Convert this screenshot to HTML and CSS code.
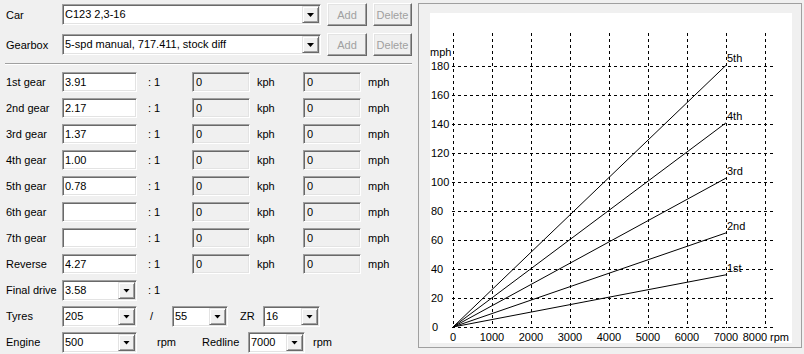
FILE: index.html
```html
<!DOCTYPE html>
<html lang="en">
<head>
  <meta charset="UTF-8" />
  <title>Gear Ratio Calculator</title>
  <link rel="stylesheet" href="styles.css">
</head>
<body>
<div class="app">

  <div class="form">
    <div class="toprow">
      <span class="lbl">Car</span>
      <div class="combo wide"><span>C123 2,3-16</span><span class="drop"></span></div>
      <button class="btn add" disabled>Add</button>
      <button class="btn del" disabled>Delete</button>
    </div>
    <div class="toprow">
      <span class="lbl">Gearbox</span>
      <div class="combo wide"><span>5-spd manual, 717.411, stock diff</span><span class="drop"></span></div>
      <button class="btn add" disabled>Add</button>
      <button class="btn del" disabled>Delete</button>
    </div>

    <div class="sep"></div>

    <div class="row">
      <span class="lbl">1st gear</span>
      <input class="box" value="3.91">
      <span class="ratio">: 1</span>
      <input class="box ro" value="0" readonly>
      <span class="unit">kph</span>
      <input class="box ro" value="0" readonly>
      <span class="unit">mph</span>
    </div>
    <div class="row">
      <span class="lbl">2nd gear</span>
      <input class="box" value="2.17">
      <span class="ratio">: 1</span>
      <input class="box ro" value="0" readonly>
      <span class="unit">kph</span>
      <input class="box ro" value="0" readonly>
      <span class="unit">mph</span>
    </div>
    <div class="row">
      <span class="lbl">3rd gear</span>
      <input class="box" value="1.37">
      <span class="ratio">: 1</span>
      <input class="box ro" value="0" readonly>
      <span class="unit">kph</span>
      <input class="box ro" value="0" readonly>
      <span class="unit">mph</span>
    </div>
    <div class="row">
      <span class="lbl">4th gear</span>
      <input class="box" value="1.00">
      <span class="ratio">: 1</span>
      <input class="box ro" value="0" readonly>
      <span class="unit">kph</span>
      <input class="box ro" value="0" readonly>
      <span class="unit">mph</span>
    </div>
    <div class="row">
      <span class="lbl">5th gear</span>
      <input class="box" value="0.78">
      <span class="ratio">: 1</span>
      <input class="box ro" value="0" readonly>
      <span class="unit">kph</span>
      <input class="box ro" value="0" readonly>
      <span class="unit">mph</span>
    </div>
    <div class="row">
      <span class="lbl">6th gear</span>
      <input class="box" value="">
      <span class="ratio">: 1</span>
      <input class="box ro" value="0" readonly>
      <span class="unit">kph</span>
      <input class="box ro" value="0" readonly>
      <span class="unit">mph</span>
    </div>
    <div class="row">
      <span class="lbl">7th gear</span>
      <input class="box" value="">
      <span class="ratio">: 1</span>
      <input class="box ro" value="0" readonly>
      <span class="unit">kph</span>
      <input class="box ro" value="0" readonly>
      <span class="unit">mph</span>
    </div>
    <div class="row">
      <span class="lbl">Reverse</span>
      <input class="box" value="4.27">
      <span class="ratio">: 1</span>
      <input class="box ro" value="0" readonly>
      <span class="unit">kph</span>
      <input class="box ro" value="0" readonly>
      <span class="unit">mph</span>
    </div>

    <div class="row">
      <span class="lbl">Final drive</span>
      <div class="combo sm"><span>3.58</span><span class="drop"></span></div>
      <span class="ratio">: 1</span>
    </div>
    <div class="row">
      <span class="lbl">Tyres</span>
      <div class="combo sm"><span>205</span><span class="drop"></span></div>
      <span class="slash">/</span>
      <div class="combo w56"><span>55</span><span class="drop"></span></div>
      <span class="zr">ZR</span>
      <div class="combo w57"><span>16</span><span class="drop"></span></div>
    </div>
    <div class="row">
      <span class="lbl">Engine</span>
      <div class="combo sm"><span>500</span><span class="drop"></span></div>
      <span class="rpm">rpm</span>
      <span class="redline">Redline</span>
      <div class="combo w57"><span>7000</span><span class="drop"></span></div>
      <span class="rpm2">rpm</span>
    </div>
  </div>

  <div class="chart">
    <svg width="362" height="330" viewBox="0 0 362 330">
      <!-- dashed grid: 39px per 1000 rpm, 29px per 20 mph -->
      <path class="grid" d="M22 314.5H345 M22 285.5H345 M22 256.5H345 M22 227.5H345 M22 198.5H345 M22 169.5H345 M22 140.5H345 M22 111.5H345 M22 82.5H345 M22 53.5H345
        M23.5 20V315 M62.5 20V315 M101.5 20V315 M140.5 20V315 M179.5 20V315 M218.5 20V315 M257.5 20V315 M296.5 20V315 M335.5 20V315"/>

      <!-- gear lines, 0 to 7000 rpm -->
      <path class="gear" d="M23 314L296 261.8"/>
      <path class="gear" d="M23 314L296 219.9"/>
      <path class="gear" d="M23 314L296 165.1"/>
      <path class="gear" d="M23 314L296 109.8"/>
      <path class="gear" d="M23 314L296 52.3"/>

      <text x="297" y="259">1st</text>
      <text x="297" y="217">2nd</text>
      <text x="297" y="162">3rd</text>
      <text x="297" y="107">4th</text>
      <text x="297" y="49">5th</text>

      <text x="0" y="43">mph</text>
      <text x="1" y="57">180</text>
      <text x="1" y="86">160</text>
      <text x="1" y="115">140</text>
      <text x="1" y="144">120</text>
      <text x="1" y="173">100</text>
      <text x="1" y="202">80</text>
      <text x="1" y="231">60</text>
      <text x="1" y="260">40</text>
      <text x="1" y="289">20</text>
      <text x="2" y="318">0</text>

      <g text-anchor="middle">
        <text x="23" y="328">0</text>
        <text x="62" y="328">1000</text>
        <text x="101" y="328">2000</text>
        <text x="140" y="328">3000</text>
        <text x="179" y="328">4000</text>
        <text x="218" y="328">5000</text>
        <text x="257" y="328">6000</text>
        <text x="296" y="328">7000</text>
        <text x="325" y="328">8000</text>
      </g>
      <text x="340" y="328">rpm</text>
    </svg>
  </div>

</div>
</body>
</html>
```

FILE: styles.css
```css
* {
  box-sizing: border-box;
}
body {
  margin: 0;
  background: #f0f0f0;
  font-family: "Liberation Sans", Arial, sans-serif;
  font-size: 11px;
  color: #000;
}
.app {
  display: flex;
  width: 804px;
  height: 354px;
}
.form {
  width: 418px;
  flex: none;
  padding: 3px 0 0 6px;
}
.toprow {
  display: flex;
  align-items: center;
  height: 23px;
}
.toprow + .toprow {
  margin-top: 7px;
}
.lbl {
  width: 56px;
  flex: none;
}
.combo {
  position: relative;
  flex: none;
  height: 21px;
  padding-left: 2px;
  line-height: 19px;
  background: #fff;
  border: 1px solid;
  border-color: #a0a0a0 #fff #fff #a0a0a0;
  box-shadow: inset 1px 1px 0 #696969, inset -1px -1px 0 #e3e3e3;
  white-space: nowrap;
}
.combo .drop {
  position: absolute;
  top: 1px;
  right: 1px;
  bottom: 1px;
  width: 17px;
  background: #f0f0f0;
  border: 1px solid;
  border-color: #e3e3e3 #696969 #696969 #e3e3e3;
  box-shadow: inset 1px 1px 0 #fff, inset -1px -1px 0 #a0a0a0;
}
.combo .drop::after {
  content: "";
  position: absolute;
  left: 4px;
  top: 6px;
  width: 7px;
  height: 4px;
  background: #000;
  clip-path: polygon(0 0, 100% 0, 50% 100%);
}
.wide {
  width: 259px;
}
.sm {
  width: 75px;
}
.w56 {
  width: 56px;
}
.w57 {
  width: 57px;
}
.btn {
  height: 23px;
  margin-left: 6px;
  padding: 0;
  font: inherit;
  color: #a0a0a0;
  background: #f0f0f0;
  border: 1px solid;
  border-color: #fff #696969 #696969 #fff;
  box-shadow: inset -1px -1px 0 #a0a0a0, inset 1px 1px 0 #e3e3e3;
}
.add {
  width: 40px;
}
.del {
  width: 39px;
}
.sep {
  width: 407px;
  height: 2px;
  margin: 7px 0 4px -1px;
  border-top: 1px solid #a0a0a0;
  border-bottom: 1px solid #fff;
}
.row {
  display: flex;
  align-items: center;
  height: 26px;
}
.box {
  flex: none;
  width: 75px;
  height: 20px;
  padding: 0 0 0 2px;
  font: inherit;
  color: #000;
  background: #fff;
  border: 1px solid;
  border-color: #a0a0a0 #fff #fff #a0a0a0;
  box-shadow: inset 1px 1px 0 #696969, inset -1px -1px 0 #e3e3e3;
  outline: none;
}
.ro {
  width: 58px;
  padding-left: 3px;
  background: #f0f0f0;
}
.ratio {
  width: 44px;
  margin-left: 11px;
  flex: none;
}
.unit {
  width: 46px;
  margin-left: 7px;
  flex: none;
}
.slash {
  width: 22px;
  margin-left: 13px;
  flex: none;
}
.zr {
  width: 23px;
  margin-left: 12px;
  flex: none;
}
.rpm {
  width: 45px;
  margin-left: 20px;
  flex: none;
}
.redline {
  width: 46px;
  flex: none;
}
.rpm2 {
  margin-left: 8px;
}
.chart {
  flex: none;
  width: 384px;
  height: 345px;
  margin-top: 3px;
  padding: 9px 9px 4px 11px;
  border: 1px solid #a0a0a0;
}
.chart svg {
  display: block;
  background: #fff;
  overflow: visible;
  font-family: "Liberation Sans", Arial, sans-serif;
  font-size: 11px;
}
.grid {
  fill: none;
  stroke: #000;
  stroke-width: 1;
  stroke-dasharray: 3 3;
  shape-rendering: crispEdges;
}
.gear {
  fill: none;
  stroke: #000;
  stroke-width: 1;
}
```
